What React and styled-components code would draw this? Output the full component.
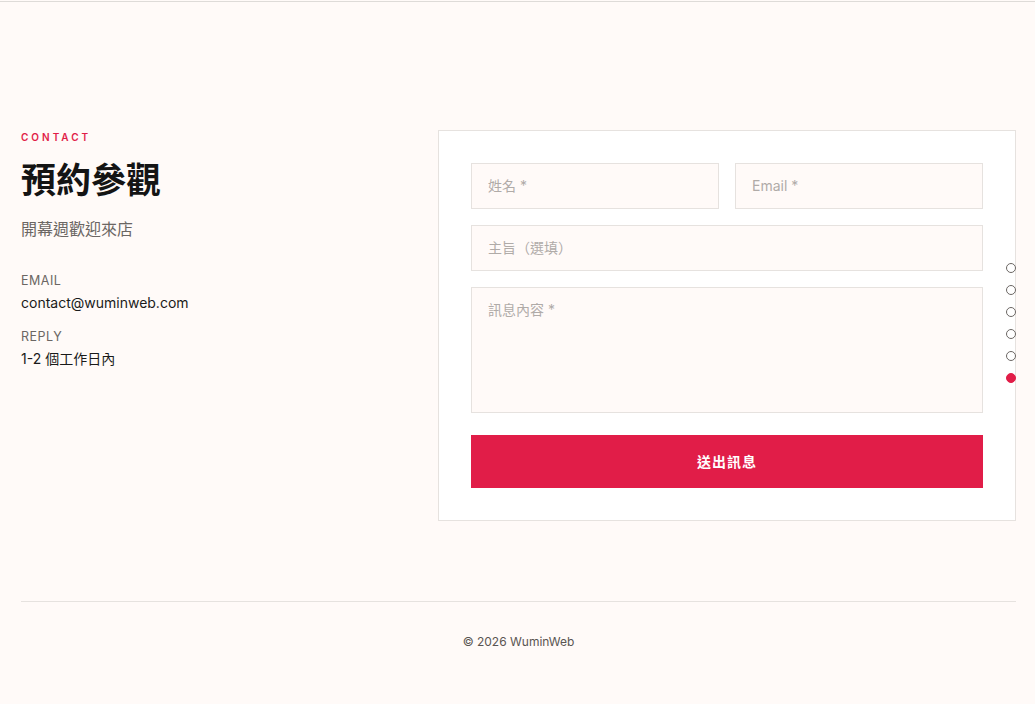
import React from 'react';
import styled, { createGlobalStyle } from 'styled-components';

const GlobalStyle = createGlobalStyle`
  * { box-sizing: border-box; }
  body {
    margin: 0;
    background: #fffaf8;
    font-family: Inter, "Noto Sans CJK TC", sans-serif;
    color: #1a1a1a;
  }
`;

const TopBar = styled.header`
  height: 2px;
  border-bottom: 1px solid #dedbd8;
`;

const Section = styled.section`
  display: grid;
  grid-template-columns: 1fr 578px;
  gap: 48px;
  align-items: start;
  padding: 128px 19px 80px 21px;
`;

const Intro = styled.div`
  display: flex;
  flex-direction: column;
`;

const Eyebrow = styled.div`
  font-size: 10px;
  font-weight: 600;
  letter-spacing: 3px;
  color: #e11d48;
  line-height: 14px;
`;

const Heading = styled.h1`
  margin: 14px 0 0;
  font-size: 35px;
  font-weight: 700;
  line-height: 44px;
  color: #141414;
`;

const Lead = styled.p`
  margin: 16px 0 0;
  font-size: 16px;
  line-height: 22px;
  color: #6b6663;
`;

const InfoList = styled.dl`
  margin: 32px 0 0;
  display: flex;
  flex-direction: column;
`;

const InfoLabel = styled.dt`
  font-size: 12.5px;
  letter-spacing: 0.5px;
  color: #6b6663;
  line-height: 18px;
  margin-top: ${(p) => (p.$first ? '0' : '15px')};
`;

const InfoValue = styled.dd`
  margin: 3px 0 0;
  font-size: 14px;
  line-height: 20px;
  color: #1a1a1a;
`;

const Card = styled.form`
  background: #ffffff;
  border: 1px solid #e6e2df;
  padding: 32px;
  display: flex;
  flex-direction: column;
  gap: 16px;
`;

const Row = styled.div`
  display: grid;
  grid-template-columns: 1fr 1fr;
  gap: 16px;
`;

const Field = styled.input`
  height: 46px;
  width: 100%;
  padding: 0 16px 2px;
  background: #fffaf8;
  border: 1px solid #e6e2df;
  font: inherit;
  font-size: 14px;
  color: #1a1a1a;
  outline: none;
  &::placeholder { color: #b0aba8; }
`;

const Area = styled.textarea`
  height: 126px;
  width: 100%;
  padding: 11px 16px;
  background: #fffaf8;
  border: 1px solid #e6e2df;
  font: inherit;
  font-size: 14px;
  resize: none;
  outline: none;
  &::placeholder { color: #b0aba8; }
`;

const Submit = styled.button`
  margin-top: 6px;
  height: 53px;
  padding-bottom: 2px;
  border: 0;
  background: #e11d48;
  color: #fff;
  font: inherit;
  font-size: 14px;
  font-weight: 700;
  letter-spacing: 1px;
  cursor: pointer;
`;

const Footer = styled.footer`
  margin: 0 19px 0 21px;
  border-top: 1px solid #e6e2df;
  padding: 32px 0 56px;
  text-align: center;
  font-size: 12px;
  color: #5a5552;
`;

const DotNav = styled.nav`
  position: fixed;
  right: 19px;
  top: 263px;
  display: flex;
  flex-direction: column;
  gap: 12px;
`;

const Dot = styled.span`
  width: 10px;
  height: 10px;
  border-radius: 50%;
  border: 1px solid ${(p) => (p.$active ? '#e11d48' : '#6b6663')};
  background: ${(p) => (p.$active ? '#e11d48' : 'transparent')};
`;

export default function App() {
  return (
    <>
      <GlobalStyle />
      <TopBar />
      <Section>
        <Intro>
          <Eyebrow>CONTACT</Eyebrow>
          <Heading>預約參觀</Heading>
          <Lead>開幕週歡迎來店</Lead>
          <InfoList>
            <InfoLabel $first>EMAIL</InfoLabel>
            <InfoValue>contact@wuminweb.com</InfoValue>
            <InfoLabel>REPLY</InfoLabel>
            <InfoValue>1-2 個工作日內</InfoValue>
          </InfoList>
        </Intro>
        <Card onSubmit={(e) => e.preventDefault()}>
          <Row>
            <Field placeholder="姓名 *" />
            <Field placeholder="Email *" />
          </Row>
          <Field placeholder="主旨（選填）" />
          <Area placeholder="訊息內容 *" />
          <Submit type="submit">送出訊息</Submit>
        </Card>
      </Section>
      <Footer>© 2026 WuminWeb</Footer>
      <DotNav>
        {[0, 1, 2, 3, 4, 5].map((i) => (
          <Dot key={i} $active={i === 5} />
        ))}
      </DotNav>
    </>
  );
}
